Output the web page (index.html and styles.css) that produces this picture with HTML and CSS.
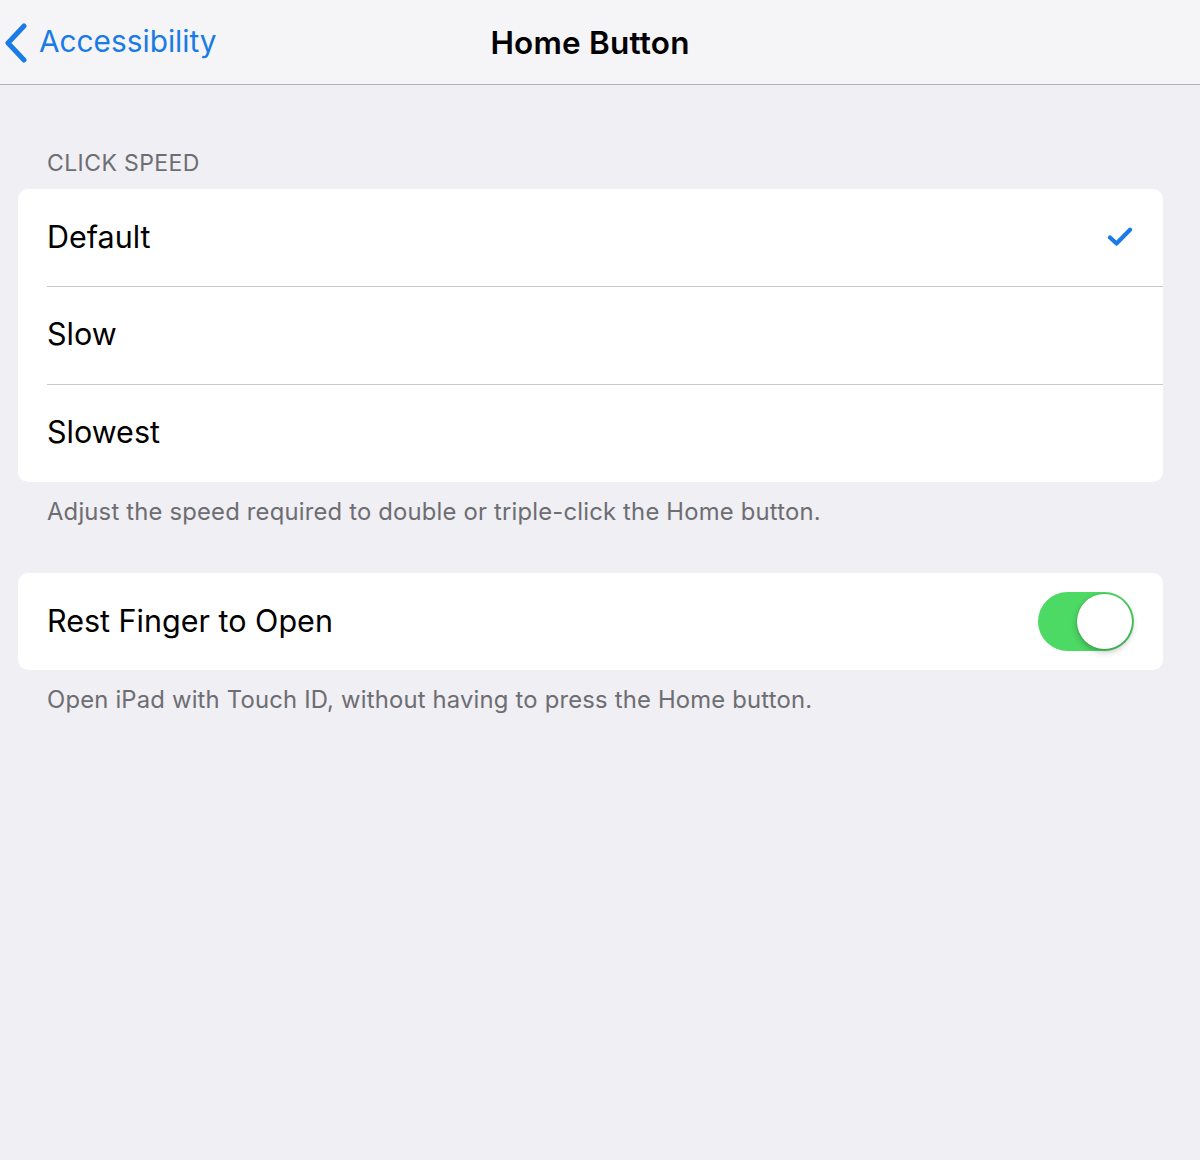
FILE: index.html
```html
<!DOCTYPE html>
<html lang="en">
<head>
<meta charset="utf-8">
<title>Home Button</title>
<link rel="stylesheet" href="styles.css">
</head>
<body>
  <header class="navbar">
    <a class="back" href="#">
      <svg class="chevron" width="26" height="40" viewBox="0 0 26 40" aria-hidden="true">
        <path d="M21 3 L5 20 L21 37" fill="none" stroke="#1a7be6" stroke-width="5" stroke-linecap="round" stroke-linejoin="round"/>
      </svg>
      <span class="back-label">Accessibility</span>
    </a>
    <h1 class="title">Home Button</h1>
  </header>

  <main class="content">
    <section class="group">
      <div class="group-header">CLICK SPEED</div>
      <ul class="card">
        <li class="row">
          <span class="row-label">Default</span>
          <svg class="check" width="26" height="20" viewBox="0 0 26 20" aria-hidden="true">
            <path d="M3 10.5 L9.5 16.5 L23 2.8" fill="none" stroke="#1a7be6" stroke-width="4.2" stroke-linecap="round" stroke-linejoin="round"/>
          </svg>
        </li>
        <li class="row"><span class="row-label">Slow</span></li>
        <li class="row"><span class="row-label">Slowest</span></li>
      </ul>
      <p class="group-footer">Adjust the speed required to double or triple-click the Home button.</p>
    </section>

    <section class="group">
      <ul class="card">
        <li class="row">
          <span class="row-label">Rest Finger to Open</span>
          <span class="switch on"><span class="knob"></span></span>
        </li>
      </ul>
      <p class="group-footer">Open iPad with Touch ID, without having to press the Home button.</p>
    </section>
  </main>
</body>
</html>
```

FILE: styles.css
```css
* {
  box-sizing: border-box;
}

html, body {
  margin: 0;
  padding: 0;
}

body {
  width: 1200px;
  min-height: 1160px;
  background: #efeff4;
  font-family: Inter, "Liberation Sans", sans-serif;
  color: #000;
}

/* Top navigation bar */
.navbar {
  position: relative;
  height: 85px;
  background: #f5f5f7;
  border-bottom: 1px solid #b2b2b6;
  display: flex;
  align-items: center;
}

.back {
  display: flex;
  align-items: center;
  gap: 10px;
  padding-left: 3px;
  text-decoration: none;
  color: #1a7be6;
  z-index: 1;
}

.chevron {
  display: block;
  margin-top: 1px;
}

.back-label {
  font-size: 29.8px;
  letter-spacing: 0;
  margin-top: -2px;
}

.title {
  position: absolute;
  left: 0;
  right: 20px;
  top: 0;
  height: 84px;
  margin: 0;
  display: flex;
  align-items: center;
  justify-content: center;
  font-size: 31.5px;
  font-weight: 600;
  letter-spacing: 0.2px;
  color: #000;
}

/* Grouped table */
.content {
  padding: 64px 37px 0 18px;
}

.group-header {
  padding-left: 29px;
  font-size: 23px;
  color: #6d6d72;
  letter-spacing: 0.4px;
  line-height: 28px;
  margin-bottom: 12px;
}

.card {
  list-style: none;
  margin: 0;
  padding: 0;
  background: #fff;
  border-radius: 10px;
  overflow: hidden;
}

.row {
  position: relative;
  height: 97px;
  display: flex;
  align-items: center;
  justify-content: space-between;
  padding: 0 29px;
}

.row + .row {
  height: 98px;
}

.row + .row::before {
  content: "";
  position: absolute;
  left: 29px;
  right: 0;
  top: 0;
  border-top: 1px solid #c8c7cc;
}

.row-label {
  font-size: 30.5px;
  letter-spacing: 0;
  margin-top: -3px;
}

.check {
  display: block;
  margin-right: 1px;
  margin-top: -2px;
}

.group-footer {
  margin: 0;
  padding: 16px 0 47px 29px;
  font-size: 23.8px;
  line-height: 28px;
  color: #6d6d72;
  letter-spacing: 0.2px;
}

/* Toggle switch */
.switch {
  position: relative;
  width: 96px;
  height: 59px;
  border-radius: 30px;
  background: #4cd964;
  margin-right: 0;
  margin-top: -1px;
}

.switch .knob {
  position: absolute;
  top: 2px;
  right: 2px;
  width: 55px;
  height: 55px;
  border-radius: 50%;
  background: #fff;
  box-shadow: 0 3px 6px rgba(0, 0, 0, 0.25), 0 0 0 1px rgba(0, 0, 0, 0.06);
}
```
